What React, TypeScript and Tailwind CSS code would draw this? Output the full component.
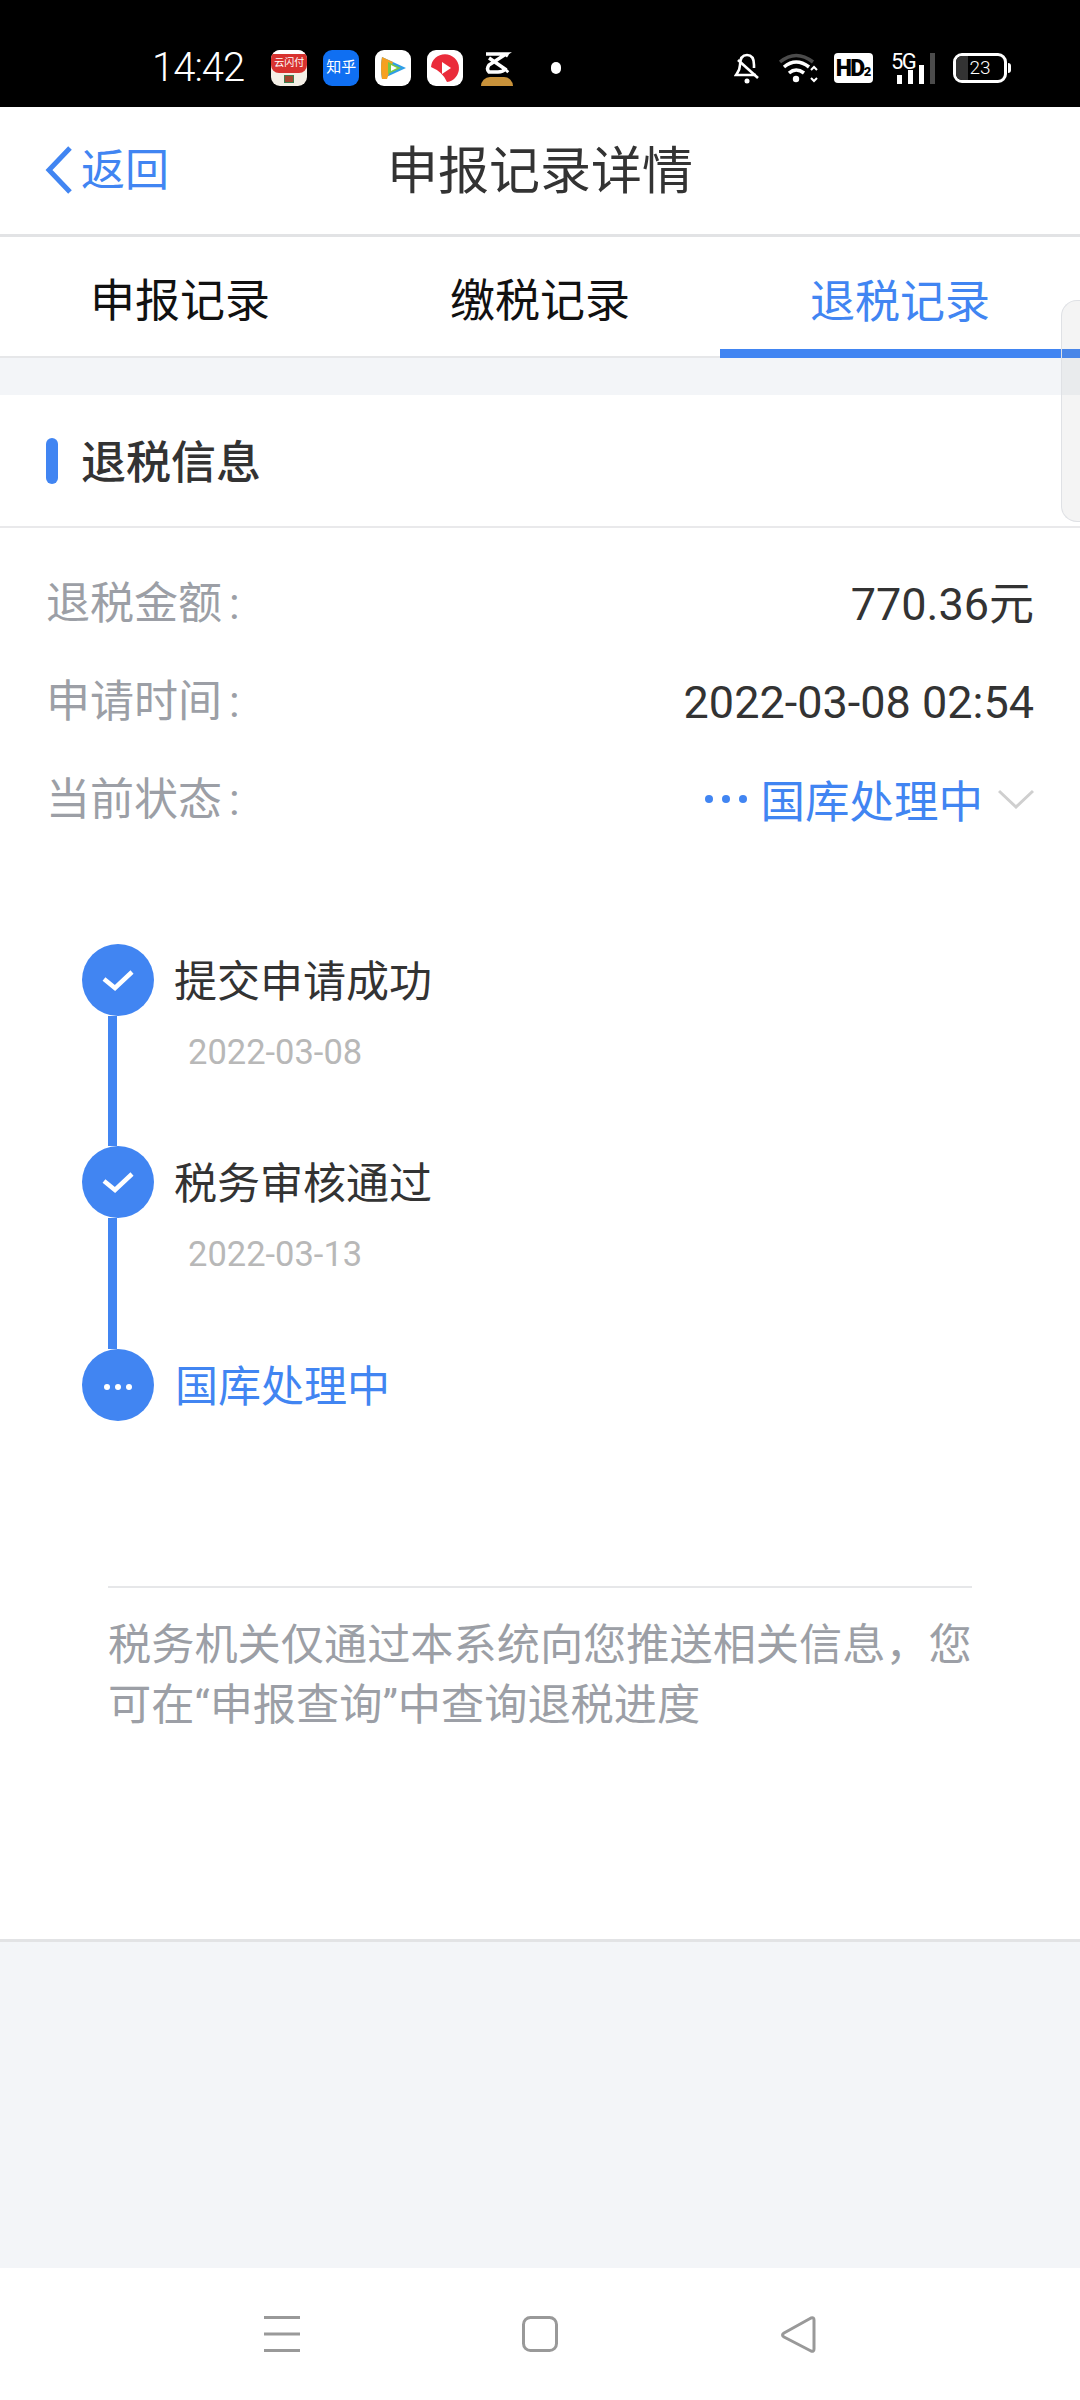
const font = "font-['Roboto','Noto_Sans_CJK_SC',sans-serif]";

const StatusIcons = () => (
  <div className="flex items-center h-[36px] ml-[27px]">
    {/* cloud pay */}
    <div className="relative w-[36px] h-[36px] rounded-[9px] overflow-hidden bg-[#f4efe6] mr-[16px]">
      <div className="h-[23px] bg-[#d8322f] rounded-b-[8px] border-t-[4px] border-white flex items-center justify-center">
        <span className="text-[10px] leading-none text-white whitespace-nowrap">云闪付</span>
      </div>
      <div className="absolute left-[13px] bottom-[3px] w-[10px] h-[8px] bg-[#a2452f] border border-[#3f7f4f]" />
    </div>
    <div className="w-[36px] h-[36px] rounded-[9px] bg-[#0f6ff2] mr-[16px] flex items-center justify-center">
      <span className="text-[15px] leading-none text-white whitespace-nowrap">知乎</span>
    </div>
    <div className="w-[36px] h-[36px] rounded-[9px] bg-white mr-[16px]">
      <svg viewBox="0 0 36 36" className="w-full h-full">
        <path d="M7 7 L31 18 L7 29 Q5 18 7 7Z" fill="#2f9ee8" />
        <path d="M7 7 L18 12 L12 29 L7 29 Q5 18 7 7Z" fill="#f6a020" />
        <path d="M13 12 L26 18 L13 24Z" fill="#7ac943" />
        <path d="M16 15 L22 18 L16 21Z" fill="#fff" />
      </svg>
    </div>
    <div className="w-[36px] h-[36px] rounded-[9px] bg-white mr-[18px]">
      <svg viewBox="0 0 36 36" className="w-full h-full">
        <path d="M4 17 A14 14 0 1 1 20 32 Q16 22 4 17Z" fill="#ea2b3a" />
        <path d="M15 12 L24 18 L15 24Z" fill="#fff" />
      </svg>
    </div>
    <div className="w-[32px] h-[36px] relative">
      <svg viewBox="0 0 32 28" className="w-[32px] h-[28px]">
        <path d="M5 4 H25 L8 15 Q5 19 8 22 H17 Q22 22 24 19 L8 8 M24 4 L27 6 M25 22 L27 20" stroke="#fff" strokeWidth="3.5" fill="none" />
      </svg>
      <div className="absolute left-0 bottom-0 w-[32px] h-[9px] rounded-t-full bg-[#c9923a]" />
    </div>
    <div className="w-[10px] h-[12px] rounded-full bg-white ml-[38px]" />
  </div>
);

const StatusRight = () => (
  <div className="flex items-center ml-auto">
    <svg viewBox="0 0 26 32" className="w-[26px] h-[32px]">
      <path d="M13 3 C7 3 6 8 6 13 C6 18 4 20 2 23 H22" fill="none" stroke="#fff" strokeWidth="2.6" />
      <path d="M13 3 C19 3 20 8 20 13 V16" fill="none" stroke="#fff" strokeWidth="2.6" />
      <path d="M4 8 L24 26" stroke="#fff" strokeWidth="2.6" />
      <circle cx="13" cy="29" r="2.5" fill="#fff" />
    </svg>
    <svg viewBox="0 0 42 32" className="w-[42px] h-[32px] ml-[18px]">
      <path d="M2 10 Q18 -3 35 10" fill="none" stroke="#4b4b4b" strokeWidth="3.5" />
      <path d="M6 15 Q18 5 31 15" fill="none" stroke="#fff" strokeWidth="3.5" />
      <path d="M11 21 Q18 15 26 21" fill="none" stroke="#fff" strokeWidth="3.5" />
      <circle cx="18" cy="27" r="3.2" fill="#fff" />
      <path d="M33 18 L36 15 L39 18 M33 26 L36 29 L39 26" fill="none" stroke="#fff" strokeWidth="2" />
    </svg>
    <div className="w-[39px] h-[30px] rounded-[4px] bg-white ml-[14px] flex items-baseline justify-center text-black font-black leading-none pt-[4px]">
      <span className="text-[23px] tracking-[-1.5px]">HD</span>
      <span className="text-[13px]">2</span>
    </div>
    <div className="relative w-[44px] h-[32px] ml-[18px]">
      <span className="absolute left-0 -top-[1px] text-[22px] leading-none text-white tracking-[-1.5px]">5G</span>
      <div className="absolute bottom-0 left-[6px] flex items-end gap-[6px]">
        <div className="w-[5px] h-[9px] bg-white" />
        <div className="w-[5px] h-[14px] bg-white" />
        <div className="w-[5px] h-[19px] bg-white" />
        <div className="w-[5px] h-[31px] bg-[#4b4b4b]" />
      </div>
    </div>
    <div className="flex items-center ml-[18px] mr-[69px]">
      <div className="relative w-[54px] h-[30px] rounded-[9px] border-[3px] border-white flex items-center justify-center overflow-hidden">
        <div className="absolute left-0 top-0 bottom-0 w-[12px] bg-[#333]" />
        <span className="relative text-[19px] leading-none text-white font-light">23</span>
      </div>
      <div className="w-[3px] h-[10px] bg-white ml-[1px] rounded-r-sm" />
    </div>
  </div>
);

const Check = () => (
  <svg viewBox="0 0 72 72" className="w-[72px] h-[72px]">
    <path d="M22 35 L33 44 L50 28" fill="none" stroke="#fff" strokeWidth="4.500" />
  </svg>
);

const Dots = () => (
  <div className="flex gap-[5px] mt-[4px]">
    <div className="w-[6px] h-[6px] rounded-full bg-white" />
    <div className="w-[6px] h-[6px] rounded-full bg-white" />
    <div className="w-[6px] h-[6px] rounded-full bg-white" />
  </div>
);

const Step = ({ label, date, last, tall }: { label: string; date?: string; last?: boolean; tall?: boolean }) => (
  <div className={`flex ${last ? "h-[72px]" : tall ? "h-[203px]" : "h-[202px]"}`}>
    <div className="w-[72px] flex flex-col shrink-0">
      <div className="w-[72px] h-[72px] rounded-full bg-[#4185f2] flex items-center justify-center shrink-0">
        {last ? <Dots /> : <Check />}
      </div>
      {!last && <div className="w-[9px] flex-1 ml-[26px] bg-[#4185f2]" />}
    </div>
    <div className="ml-[20px]">
      <div className={`h-[72px] pt-[5px] flex items-center text-[43px] leading-none ${last ? "text-[#4185f2] ml-[1px]" : "text-[#333]"}`}>
        {label}
      </div>
      {date && <div className="ml-[14px] mt-[19px] text-[34.500px] leading-none text-[#b8b8b8]">{date}</div>}
    </div>
  </div>
);

const Row = ({ label, children }: { label: string; children: React.ReactNode }) => (
  <div className="h-[98px] flex items-center justify-between">
    <span className="text-[44px] leading-none text-[#9c9fa6] pt-[2px]">
      {label}
      <span className="ml-[7px]">:</span>
    </span>
    {children}
  </div>
);

export default function App() {
  return (
    <div className={`${font} relative w-[1080px] h-[2400px] flex flex-col bg-[#f3f5f8] overflow-hidden`}>
      <div className="h-[107px] bg-black flex items-center pl-[152px] shrink-0 pt-[28px]">
        <span className="text-[40px] leading-none text-white font-light tracking-[-1px]">14:42</span>
        <StatusIcons />
        <StatusRight />
      </div>

      <div className="relative h-[130px] bg-white border-b-[3px] border-[#e2e3e5] flex items-center justify-center shrink-0">
        <div className="absolute left-[44px] top-[39px] flex items-center">
          <svg viewBox="0 0 30 48" className="w-[30px] h-[48px]">
            <path d="M26 2 L5 24 L26 46" fill="none" stroke="#4185f2" strokeWidth="5" />
          </svg>
          <span className="ml-[7px] text-[44px] leading-none text-[#4185f2] pt-[2px]">返回</span>
        </div>
        <span className="text-[51px] leading-none text-[#333] pt-[2px]">申报记录详情</span>
      </div>

      <div className="h-[121px] bg-white border-b-[2px] border-[#e6e7e9] flex shrink-0">
        <div className="w-[360px] pt-[10px] flex items-center justify-center text-[45px] leading-none text-[#111]">申报记录</div>
        <div className="w-[360px] pt-[10px] flex items-center justify-center text-[45px] leading-none text-[#111]">缴税记录</div>
        <div className="w-[360px] pt-[18px] -mb-[2px] border-b-[9px] border-[#4185f2] flex items-center justify-center text-[45px] leading-none text-[#4185f2]">退税记录</div>
      </div>

      <div className="mt-[37px] h-[1547px] bg-white border-b-[3px] border-[#e2e3e5] shrink-0">
        <div className="h-[133px] border-b-[2px] border-[#e9e9eb] flex items-center pl-[46px]">
          <div className="w-[12px] h-[46px] rounded-full bg-[#4185f2]" />
          <span className="ml-[23px] pt-[5px] text-[45px] leading-none font-medium text-[#333]">退税信息</span>
        </div>

        <div className="pl-[46px] pr-[46px] pt-[26px]">
          <Row label="退税金额">
            <span className="text-[45px] leading-none text-[#333] pt-[2px]">770.36元</span>
          </Row>
          <Row label="申请时间">
            <span className="text-[45px] leading-none text-[#333] pt-[2px]">2022-03-08 02:54</span>
          </Row>
          <Row label="当前状态">
            <div className="flex items-center">
              <div className="flex gap-[9px] mr-[13px]">
                <div className="w-[8px] h-[8px] rounded-full bg-[#4185f2]" />
                <div className="w-[8px] h-[8px] rounded-full bg-[#4185f2]" />
                <div className="w-[8px] h-[8px] rounded-full bg-[#4185f2]" />
              </div>
              <span className="text-[44.500px] leading-none text-[#4185f2] pt-[8px]">国库处理中</span>
              <svg viewBox="0 0 36 20" className="w-[36px] h-[20px] ml-[15px]">
                <path d="M1 2 L18 18 L35 2" fill="none" stroke="#cfcfcf" strokeWidth="3" />
              </svg>
            </div>
          </Row>
        </div>

        <div className="pl-[82px] mt-[96px]">
          <Step label="提交申请成功" date="2022-03-08" />
          <Step label="税务审核通过" date="2022-03-13" tall />
          <Step label="国库处理中" last />
        </div>

        <div className="mx-[108px] mt-[165px] border-t-[2px] border-[#e6e7e9] pt-[28px] text-[43.200px] leading-[60px] text-[#9c9fa6]">
          税务机关仅通过本系统向您推送相关信息，您可在“申报查询”中查询退税进度
        </div>
      </div>

      <div className="mt-auto h-[132px] bg-white shrink-0">
        <svg viewBox="0 0 1080 132" className="w-[1080px] h-[132px]">
          <path d="M264 49.500 H300 M264 66 H300 M264 82.500 H300" stroke="#999" strokeWidth="3" />
          <rect x="523.500" y="49.500" width="33" height="33" rx="7" fill="none" stroke="#999" strokeWidth="3" />
          <path d="M811 50 L784 65 Q781 67 784 69 L811 83 Q814 84 814 81 V52 Q814 49 811 50Z" fill="none" stroke="#999" strokeWidth="3" strokeLinejoin="round" />
        </svg>
      </div>

      <div className="absolute right-0 top-[300px] w-[19px] h-[222px] rounded-l-[16px] border border-r-0 border-[#dfe1e5] bg-[rgba(150,150,150,0.1)]" />
    </div>
  );
}
